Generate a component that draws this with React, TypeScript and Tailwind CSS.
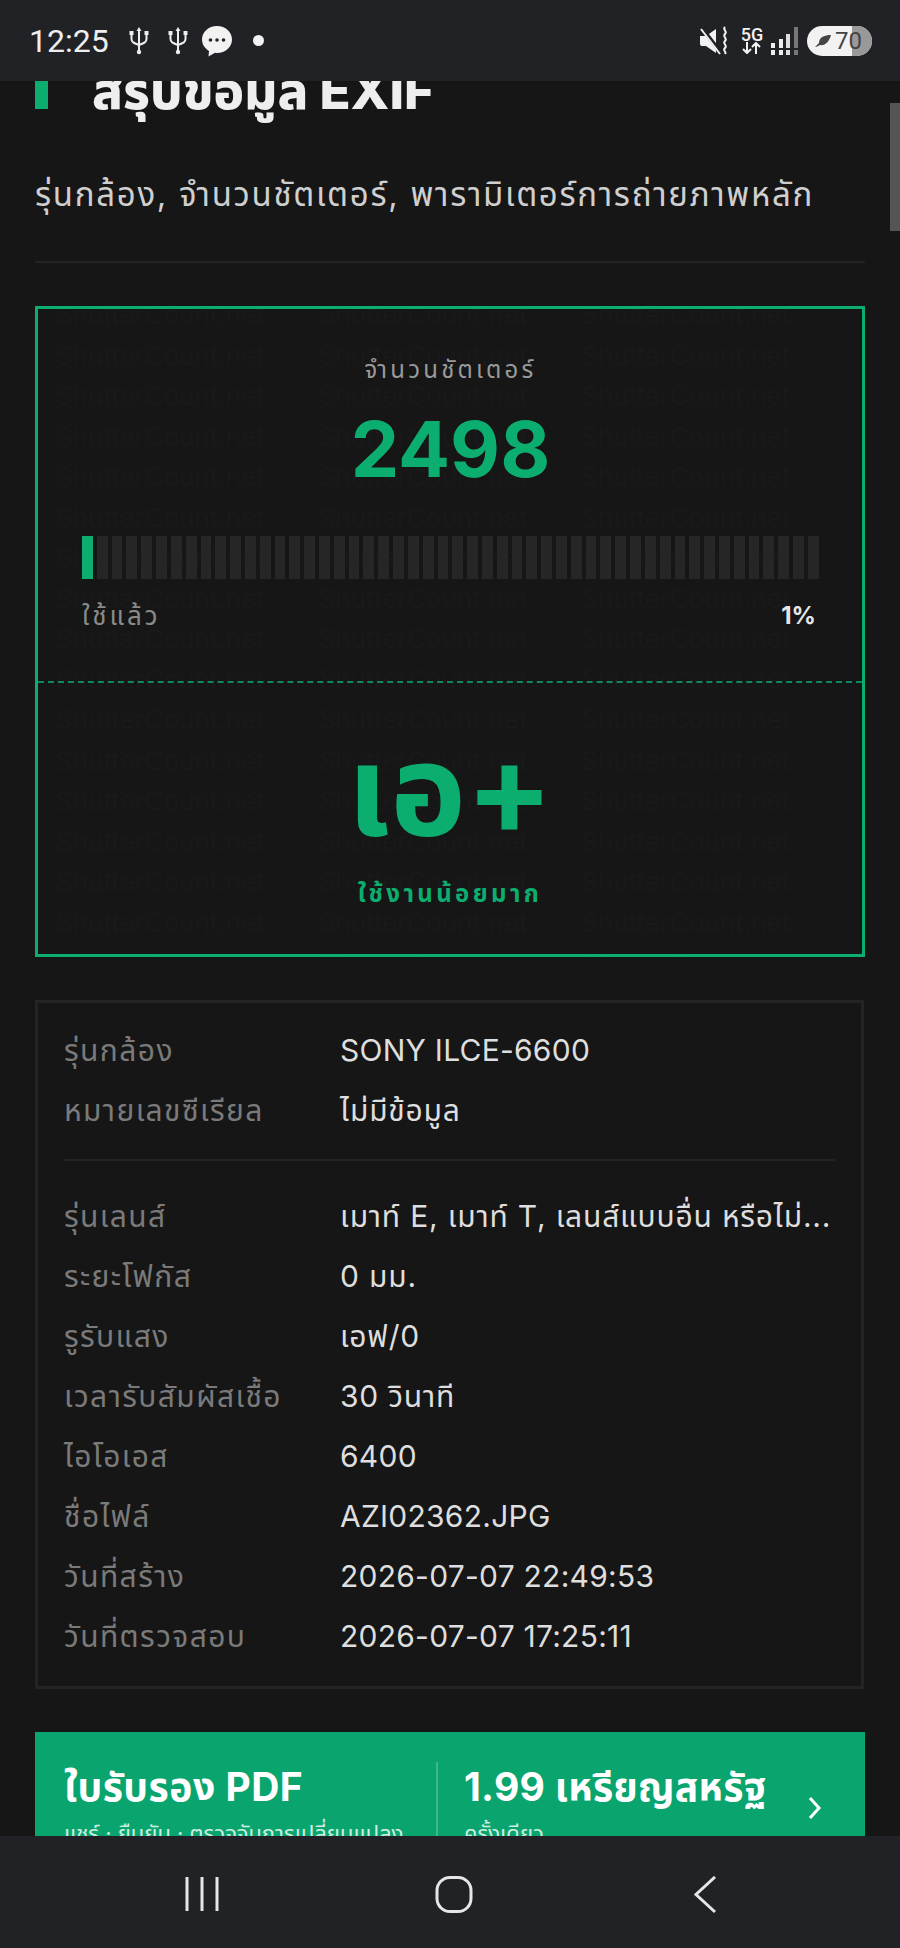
const thai = "font-['Inter','Noto_Sans','Noto_Sans_Thai',sans-serif]";

const details = [
  { label: 'รุ่นเลนส์', value: 'เมาท์ E, เมาท์ T, เลนส์แบบอื่น หรือไม่...' },
  { label: 'ระยะโฟกัส', value: '0 มม.' },
  { label: 'รูรับแสง', value: 'เอฟ/0' },
  { label: 'เวลารับสัมผัสเชื้อ', value: '30 วินาที' },
  { label: 'ไอโอเอส', value: '6400' },
  { label: 'ชื่อไฟล์', value: 'AZI02362.JPG' },
  { label: 'วันที่สร้าง', value: '2026-07-07 22:49:53' },
  { label: 'วันที่ตรวจสอบ', value: '2026-07-07 17:25:11' },
];

function UsbIcon() {
  return (
    <svg width="20" height="28" viewBox="0 0 20 28" fill="none" stroke="#eeeeee" strokeWidth="2">
      <path d="M10 2v23M2.500 7v5c0 3 2 4 7.500 6M17.500 7v5c0 3-2 4-7.500 6" />
      <path d="M10 0l2.500 4h-5z" fill="#eeeeee" stroke="none" />
      <circle cx="10" cy="25" r="2.200" fill="#eeeeee" stroke="none" />
      <rect x="0.500" y="4" width="4" height="4" fill="#eeeeee" stroke="none" />
      <rect x="15.500" y="4" width="4" height="4" fill="#eeeeee" stroke="none" />
    </svg>
  );
}

function StatusBar() {
  return (
    <div className="h-[81px] shrink-0 bg-[#212226] flex items-center justify-between pl-[29px] pr-[28px] relative z-10">
      <div className="flex items-center">
        <span className="font-['Roboto',sans-serif] text-[32px] text-[#eeeeee] w-[100px]">12:25</span>
        <div className="w-[39px]"><UsbIcon /></div>
        <div className="w-[33px]"><UsbIcon /></div>
        <svg width="32" height="32" viewBox="0 0 32 32">
          <path d="M16 1C7.500 1 1 7 1 14.500c0 5 3 9 7 11.500l-.5 5.500 6.500-3.700c.7.100 1.400.2 2 .2 8.500 0 15-6 15-13.500S24.500 1 16 1z" fill="#f2f2f2" />
          <circle cx="9.500" cy="15" r="1.800" fill="#212226" />
          <circle cx="16" cy="15" r="1.800" fill="#212226" />
          <circle cx="22.500" cy="15" r="1.800" fill="#212226" />
        </svg>
        <div className="w-[11px] h-[11px] rounded-full bg-[#f2f2f2] ml-[20px]" />
      </div>
      <div className="flex items-center">
        <svg width="30" height="30" viewBox="0 0 30 30">
          <path d="M0 10h6l10-7v24l-10-7H2a2 2 0 0 1-2-2z" fill="#f2f2f2" />
          <path d="M1 1l20 26" stroke="#212226" strokeWidth="4" />
          <path d="M1 3l19 25" stroke="#f2f2f2" strokeWidth="2" />
          <path d="M25 1c-3 3 3 4 0 7s3 4 0 7 3 4 0 7 2 3 0 6" fill="none" stroke="#f2f2f2" strokeWidth="2" />
        </svg>
        <div className="ml-[9px] w-[26px] flex flex-col items-center leading-none">
          <span className="font-['Roboto',sans-serif] text-[18px] font-medium text-[#f2f2f2] leading-[15px]">5G</span>
          <svg width="20" height="12" viewBox="0 0 20 12" fill="none" stroke="#f2f2f2" strokeWidth="2">
            <path d="M5 0v10M1 7l4 4 4-4M14 12V2M10 5l4-4 4 4" />
          </svg>
        </div>
        <svg width="28" height="30" viewBox="0 0 28 30" className="ml-[6px]">
          <rect x="0" y="17" width="4" height="12" fill="#eeeeee" />
          <rect x="8" y="13" width="4" height="16" fill="#eeeeee" />
          <rect x="15" y="8" width="4" height="21" fill="#dddddd" />
          <rect x="23" y="1" width="4" height="28" fill="#777777" />
          <rect x="0" y="22" width="28" height="2" fill="#212226" />
        </svg>
        <div className="ml-[8px] w-[65px] h-[30px] rounded-full bg-[#f2f2f2] relative overflow-hidden flex items-center pl-[8px]">
          <div className="absolute top-0 bottom-0 right-0 w-[20px] bg-[#999999]" />
          <svg width="16" height="14" viewBox="0 0 16 14" className="relative">
            <path d="M0 13c3-1 4-1 5-2 5 1 9-3 11-10C10 1 4 3 4 9z" fill="#444444" />
          </svg>
          <span className="relative font-['Roboto',sans-serif] text-[24px] text-[#444444] ml-[4px]">70</span>
        </div>
      </div>
    </div>
  );
}

function ShutterCard() {
  return (
    <div className="relative border-[3px] border-[#0cae70] mt-[43px] h-[651px] overflow-hidden">
      {/* watermark */}
      <div className="absolute inset-x-0 -top-[14px] grid grid-cols-3 auto-rows-[40.500px] px-[18px] text-[26px] leading-[40px] text-[#19191a] whitespace-nowrap">
        {Array.from({ length: 51 }, (_, i) => (
          <span key={i}>ShutterCount.net</span>
        ))}
      </div>

      <div className="relative h-[372px] pt-[44px] pl-[44px] pr-[43px] flex flex-col">
        <div className="text-center text-[24px] leading-[34px] tracking-[3.200px] text-[#9a9a9a]">จำนวนชัตเตอร์</div>
        <div className="text-center text-[77px] leading-[88px] font-bold text-[#0cae70] mt-[18px]">2498</div>
        <div className="flex gap-[4px] h-[43px] mt-[43px]">
          {Array.from({ length: 50 }, (_, i) => (
            <div key={i} className={i === 0 ? 'flex-1 bg-[#0cae70]' : 'flex-1 bg-[#262626]'} />
          ))}
        </div>
        <div className="flex justify-between items-center mt-[20px] pr-[3px]">
          <span className="text-[26px] leading-[34px] tracking-[3px] text-[#8a8a8a]">ใช้แล้ว</span>
          <span className="text-[24px] leading-[34px] font-bold text-[#e6e6e6]">1%</span>
        </div>
      </div>

      <div className="relative border-t-2 border-dashed border-[#0c8a5e] pt-[46px] flex flex-col items-center">
        <div className="text-[128px] leading-[120px] font-bold text-[#0cae70] whitespace-nowrap">เอ+</div>
        <div className="text-[24px] leading-[34px] font-bold text-[#0cae70] tracking-[3.400px] mt-[28px]">ใช้งานน้อยมาก</div>
      </div>
    </div>
  );
}

function DetailRow({ label, value }: { label: string; value: string }) {
  const hasThai = /[\u0E00-\u0E7F]/.test(value);
  return (
    <div className="flex h-[60px] items-center text-[30px]">
      <span className="w-[276px] shrink-0 text-[#7a7a7a] tracking-[1.400px] whitespace-nowrap">{label}</span>
      <span className={hasThai ? 'text-[#dedede] whitespace-nowrap tracking-[0.800px]' : 'text-[#dedede] whitespace-nowrap tracking-[0.250px]'}>{value}</span>
    </div>
  );
}

function DetailCard() {
  return (
    <div className="border-[3px] border-[#242425] mt-[43px] h-[689px] mr-[1px] pt-[17px] px-[26px]">
      <DetailRow label="รุ่นกล้อง" value="SONY ILCE-6600" />
      <DetailRow label="หมายเลขซีเรียล" value="ไม่มีข้อมูล" />
      <div className="h-[2px] bg-[#232324] mt-[19px] mb-[25px]" />
      {details.map((d) => (
        <DetailRow key={d.label} label={d.label} value={d.value} />
      ))}
    </div>
  );
}

function PdfBanner() {
  return (
    <div className="mt-[43px] h-[140px] bg-[#0aa56e] flex pt-[30px] text-white relative">
      <div className="w-[403px] shrink-0 pl-[29px] border-r-2 border-[#3bb88c]">
        <div className="text-[39px] leading-[46px] font-bold tracking-[0.500px] whitespace-nowrap mt-[2px]">ใบรับรอง PDF</div>
        <div className="text-[22px] leading-[30px] text-[#cfeee2] mt-[8px] whitespace-nowrap">แชร์ · ยืนยัน · ตรวจจับการเปลี่ยนแปลง</div>
      </div>
      <div className="pl-[26px] flex-1">
        <div className="text-[39px] leading-[46px] font-bold tracking-[0.300px] whitespace-nowrap mt-[2px]">1.99 เหรียญสหรัฐ</div>
        <div className="text-[22px] leading-[30px] text-[#cfeee2] mt-[8px]">ครั้งเดียว</div>
      </div>
      <svg width="14" height="24" viewBox="0 0 14 24" fill="none" stroke="white" strokeWidth="3" className="absolute right-[43px] top-[64px]">
        <path d="M2 2l9 10-9 10" />
      </svg>
    </div>
  );
}

function NavBar() {
  return (
    <div className="h-[112px] shrink-0 bg-[#212226] flex items-start pt-[40px] pl-[184px] gap-[215px] relative z-10">
      <svg width="36" height="36" viewBox="0 0 36 36" stroke="#e6e6e6" strokeWidth="3">
        <path d="M3 1v34M18 1v34M33 1v34" />
      </svg>
      <svg width="38" height="38" viewBox="0 0 38 38" fill="none" stroke="#e6e6e6" strokeWidth="3">
        <rect x="2" y="1.500" width="34" height="34" rx="13" />
      </svg>
      <svg width="24" height="38" viewBox="0 0 24 38" fill="none" stroke="#e6e6e6" strokeWidth="3" className="ml-[5px]">
        <path d="M22 1L3 18.500 22 36" />
      </svg>
    </div>
  );
}

export default function App() {
  return (
    <div className={`w-[900px] h-[1948px] bg-[#161617] flex flex-col overflow-hidden ${thai}`}>
      <StatusBar />
      <main className="flex-1 relative overflow-hidden">
        <div className="absolute right-0 top-[22px] w-[10px] h-[128px] bg-[#555555]" />
        <div className="pl-[35px] pr-[35px] -mt-[8px]">
          <div className="flex items-center h-[40px]">
            <div className="w-[13px] h-[36px] bg-[#0cae70] -mt-[4px]" />
            <h1 className="ml-[44px] -mt-[4px] text-[51px] leading-[40px] font-extrabold text-[#eeeeee] whitespace-nowrap">สรุปข้อมูล EXIF</h1>
          </div>
          <p className="text-[33px] leading-[40px] tracking-[1.700px] text-[#cfcfcf] mt-[61px] whitespace-nowrap">รุ่นกล้อง, จำนวนชัตเตอร์, พารามิเตอร์การถ่ายภาพหลัก</p>
          <div className="h-[2px] bg-[#232324] mt-[47px]" />
          <ShutterCard />
          <DetailCard />
          <PdfBanner />
        </div>
      </main>
      <NavBar />
    </div>
  );
}
